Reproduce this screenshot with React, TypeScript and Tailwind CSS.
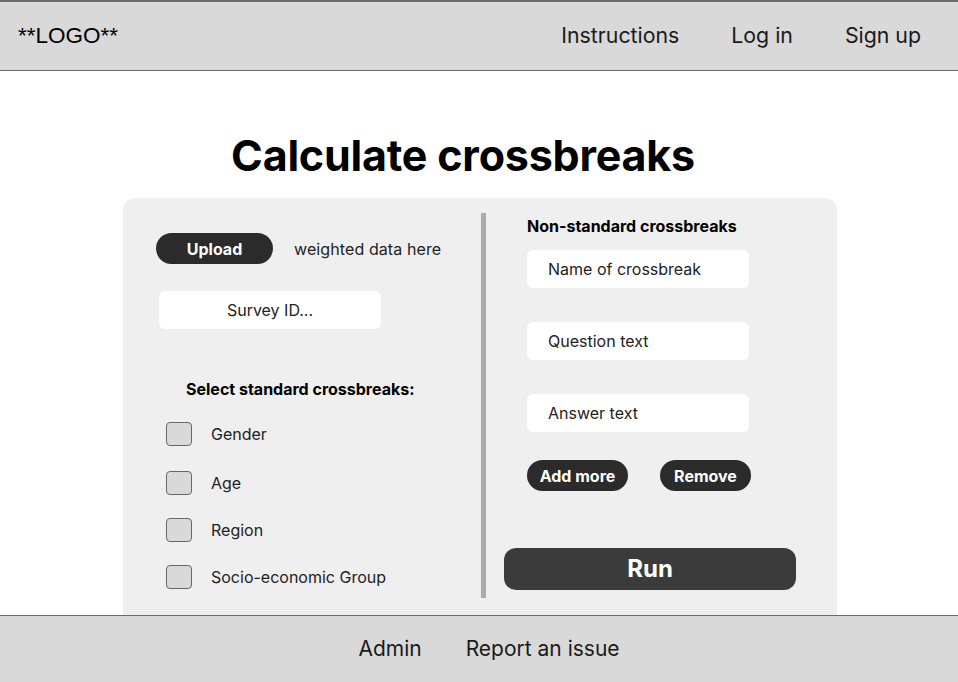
import React from "react";

const checks = ["Gender", "Age", "Region", "Socio-economic Group"];

export default function App() {
  return (
    <div className="h-[682px] flex flex-col overflow-hidden bg-white text-black font-['Inter',sans-serif]">
      <header className="h-[71px] shrink-0 flex items-center bg-[#d9d9d9] border-t-2 border-b border-[#6b6b6b]">
        <div className="pl-[18px] text-[22.5px] font-['Liberation_Sans',sans-serif]">**LOGO**</div>
        <nav className="ml-auto flex items-center gap-[52px] pr-[37px] text-[21.3px] text-[#1a1a1a]">
          <span>Instructions</span>
          <span>Log in</span>
          <span>Sign up</span>
        </nav>
      </header>

      <main className="flex-1 min-h-0 flex flex-col items-center">
        <h1 className="mt-[58px] mr-[32px] text-[43px] leading-[52px] font-bold tracking-[-0.2px]">Calculate crossbreaks</h1>

        <div className="mt-[17px] w-[714px] shrink-0 h-[440px] bg-[#efefef] rounded-[12px] flex ml-[2px]">
          <div className="w-[358px] pl-[33px] pt-[35px] text-[16px]">
            <div className="flex items-center">
              <button className="w-[117px] h-[31px] rounded-full bg-[#2b2b2b] text-white font-bold text-[16px]">Upload</button>
              <span className="ml-[21px] text-[#222] tracking-[0.1px]">weighted data here</span>
            </div>
            <div className="mt-[27px] ml-[3px] w-[222px] h-[38px] bg-white rounded-[6px] flex items-center justify-center text-[#222]">
              Survey ID...
            </div>
            <div className="mt-[48px] ml-[30px] font-bold text-[16px]">Select standard crossbreaks:</div>
            <div className="mt-[21px] ml-[10px] flex flex-col">
              {checks.map((c, i) => (
                <div
                  key={c}
                  className={`flex items-center h-[24px] ${i === 1 ? "mt-[25px]" : i > 1 ? "mt-[23px]" : ""}`}
                >
                  <div className="w-[26px] h-[24px] rounded-[4px] border border-[#666] bg-[#d9d9d9]" />
                  <span className="ml-[19px] text-[#222]">{c}</span>
                </div>
              ))}
            </div>
          </div>

          <div className="mt-[15px] w-[5px] h-[385px] bg-[#aaaaaa]" />

          <div className="flex-1 pt-[16px] text-[16px]">
            <div className="ml-[41px] font-bold text-[16px]">Non-standard crossbreaks</div>
            <div className="ml-[41px] mt-[12px] flex flex-col gap-[34px]">
              {["Name of crossbreak", "Question text", "Answer text"].map((t) => (
                <div key={t} className="w-[222px] h-[38px] bg-white rounded-[6px] flex items-center pl-[21px] text-[#222]">
                  {t}
                </div>
              ))}
            </div>
            <div className="ml-[41px] mt-[28px] flex items-center gap-[32px]">
              <button className="w-[101px] h-[31px] rounded-full bg-[#2b2b2b] text-white font-bold text-[16px]">Add more</button>
              <button className="w-[91px] h-[31px] rounded-full bg-[#2b2b2b] text-white font-bold text-[16px]">Remove</button>
            </div>
            <button className="ml-[18px] mt-[57px] w-[292px] h-[42px] rounded-[12px] bg-[#3b3b3b] text-white font-bold text-[24px]">
              Run
            </button>
          </div>
        </div>
      </main>

      <footer className="h-[67px] shrink-0 bg-[#d9d9d9] border-t border-[#6b6b6b] flex items-center justify-center gap-[44px] pl-[20px] text-[21px] text-[#1a1a1a]">
        <span>Admin</span>
        <span>Report an issue</span>
      </footer>
    </div>
  );
}
